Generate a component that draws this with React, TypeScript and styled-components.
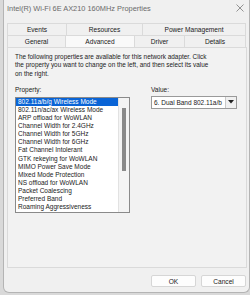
import React from 'react';
import styled, { createGlobalStyle } from 'styled-components';

const GlobalStyle = createGlobalStyle`
  html, body {
    margin: 0;
    padding: 0;
    background: #d9d9d9;
  }
  body {
    font-family: 'Liberation Sans', Arial, sans-serif;
    overflow: hidden;
  }
`;

const topTabs = [
  { label: 'Events', width: 60 },
  { label: 'Resources', width: 76 },
  { label: 'Power Management', width: 103 },
];

const bottomTabs = [
  { label: 'General', width: 59 },
  { label: 'Advanced', width: 69, active: true },
  { label: 'Driver', width: 50 },
  { label: 'Details', width: 61 },
];

const properties = [
  '802.11a/b/g Wireless Mode',
  '802.11n/ac/ax Wireless Mode',
  'ARP offload for WoWLAN',
  'Channel Width for 2.4GHz',
  'Channel Width for 5GHz',
  'Channel Width for 6GHz',
  'Fat Channel Intolerant',
  'GTK rekeying for WoWLAN',
  'MIMO Power Save Mode',
  'Mixed Mode Protection',
  'NS offload for WoWLAN',
  'Packet Coalescing',
  'Preferred Band',
  'Roaming Aggressiveness',
];

export default function App() {
  return (
    <>
      <GlobalStyle />
      <Window>
        <TitleBar>
          <Title>Intel(R) Wi-Fi 6E AX210 160MHz Properties</Title>
          <CloseIcon width="8" height="8" viewBox="0 0 8 8">
            <path d="M0.5 0.5 L7.5 7.5 M7.5 0.5 L0.5 7.5" stroke="#7a7a7a" strokeWidth="0.8" />
          </CloseIcon>
        </TitleBar>

        <Tabs>
          <TabRow>
            {topTabs.map((t) => (
              <Tab key={t.label} $width={t.width}>
                {t.label}
              </Tab>
            ))}
          </TabRow>
          <TabRow>
            {bottomTabs.map((t) => (
              <Tab key={t.label} $width={t.width} $active={t.active}>
                {t.label}
              </Tab>
            ))}
          </TabRow>
        </Tabs>

        <Panel>
          <Intro>
            The following properties are available for this network adapter. Click
            <br />
            the property you want to change on the left, and then select its value
            <br />
            on the right.
          </Intro>

          <Columns>
            <PropertyColumn>
              <Label>Property:</Label>
              <ListBox>
                <Items>
                  {properties.map((p, i) => (
                    <Item key={p} $selected={i === 0}>
                      {p}
                    </Item>
                  ))}
                </Items>
                <ScrollTrack>
                  <ScrollThumb />
                </ScrollTrack>
              </ListBox>
            </PropertyColumn>

            <ValueColumn>
              <Label>Value:</Label>
              <Combo>
                <ComboText>6. Dual Band 802.11a/b</ComboText>
                <ComboButton>
                  <svg width="6" height="4" viewBox="0 0 6 4">
                    <path d="M0 0 L6 0 L3 3.5 Z" fill="#222" />
                  </svg>
                </ComboButton>
              </Combo>
            </ValueColumn>
          </Columns>
        </Panel>

        <Footer>
          <Button>OK</Button>
          <Button>Cancel</Button>
        </Footer>
      </Window>
    </>
  );
}

const Window = styled.div`
  box-sizing: border-box;
  width: 247px;
  height: 293px;
  margin-left: 3px;
  display: flex;
  flex-direction: column;

  background: #f0f0f0;
  border: 1px solid #b4b4b4;
  border-top: none;
  border-radius: 0 0 6px 6px;
`;

const TitleBar = styled.div`
  height: 16px;
  display: flex;
  align-items: center;
  justify-content: space-between;
  padding: 0 5px 0 3px;
`;

const Title = styled.span`
  font-size: 7.4px;
  color: #6a6a6a;
`;

const CloseIcon = styled.svg`
  display: block;
`;

const Tabs = styled.div`
  display: flex;
  flex-direction: column;
  padding: 7px 2px 0 3px;
`;

const TabRow = styled.div`
  display: flex;
`;

const Tab = styled.div<{ $width: number; $active?: boolean }>`
  box-sizing: border-box;
  width: ${({ $width }) => $width}px;
  height: 12px;
  display: flex;
  align-items: center;
  justify-content: center;

  font-size: 6.6px;
  color: #1a1a1a;
  background: ${({ $active }) => ($active ? '#f9f9f9' : '#f0f0f0')};
  border: 1px solid #dadada;
  border-left: none;
  border-bottom: none;

  &:first-child {
    border-left: 1px solid #dadada;
  }
`;

const Panel = styled.div`
  box-sizing: border-box;
  height: 221px;
  margin: 0 2px 0 3px;
  padding: 4.5px 7px;

  background: #f2f2f2;
  border: 1px solid #dadada;
`;

const Intro = styled.p`
  margin: 0;
  font-size: 6.4px;
  line-height: 8.7px;
  color: #1a1a1a;
`;

const Columns = styled.div`
  display: flex;
  margin-top: 6px;
`;

const PropertyColumn = styled.div`
  width: 115px;
  display: flex;
  flex-direction: column;
`;

const ValueColumn = styled.div`
  margin-left: 21px;
  display: flex;
  flex-direction: column;
`;

const Label = styled.span`
  font-size: 6.5px;
  line-height: 9px;
  color: #1a1a1a;
`;

const ListBox = styled.div`
  box-sizing: border-box;
  height: 116px;
  margin-top: 3px;
  display: flex;

  background: #ffffff;
  border: 1px solid #8a8a8a;
`;

const Items = styled.div`
  flex: 1;
`;

const Item = styled.div<{ $selected?: boolean }>`
  height: 8.15px;
  line-height: 8.15px;
  padding-left: 2px;
  font-size: 6.5px;
  white-space: nowrap;
  color: ${({ $selected }) => ($selected ? '#ffffff' : '#1a1a1a')};
  background: ${({ $selected }) => ($selected ? '#0a64d6' : 'transparent')};
`;

const ScrollTrack = styled.div`
  width: 10px;
  padding-top: 10px;
  display: flex;
  justify-content: center;
  background: #f4f4f4;
  border-left: 1px solid #e2e2e2;
`;

const ScrollThumb = styled.div`
  width: 4px;
  height: 63px;
  background: #8a8a8a;
`;

const Combo = styled.div`
  box-sizing: border-box;
  width: 86px;
  height: 13px;
  margin-top: 2px;
  display: flex;
  align-items: center;

  background: #ffffff;
  border: 1px solid #9a9a9a;
`;

const ComboText = styled.span`
  flex: 1;
  padding-left: 2px;
  font-size: 6.5px;
  white-space: nowrap;
  overflow: hidden;
  color: #1a1a1a;
`;

const ComboButton = styled.div`
  width: 10px;
  height: 100%;
  display: flex;
  align-items: center;
  justify-content: center;
  background: #f0f0f0;
  border-left: 1px solid #c8c8c8;
`;

const Footer = styled.div`
  flex: 1;
  display: flex;
  justify-content: flex-end;
  align-items: center;
  gap: 5px;
  padding: 2px 3px 0 0;
`;

const Button = styled.button`
  box-sizing: border-box;
  width: 45px;
  height: 12px;
  padding: 0;

  font-family: 'Liberation Sans', Arial, sans-serif;
  font-size: 6.6px;
  color: #1a1a1a;
  background: #fdfdfd;
  border: 1px solid #d6d6d6;
  border-radius: 2px;
`;
